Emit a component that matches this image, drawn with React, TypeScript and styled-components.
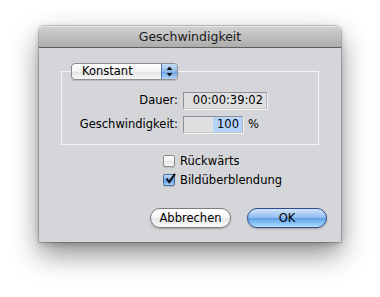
import React from "react";
import styled, { createGlobalStyle } from "styled-components";

const Global = createGlobalStyle`
  html, body { margin: 0; padding: 0; background: #ffffff; }
  body { font-family: "DejaVu Sans", Verdana, sans-serif; color: #000; }
`;

const Stage = styled.div`
  padding: 26px 0 0 39px;
  width: 380px;
  height: 297px;
  box-sizing: border-box;
`;

const Window = styled.div`
  width: 302px;
  display: flex;
  flex-direction: column;
  background: #d5d6d9;
  border-radius: 5px 5px 0 0;
  box-shadow: 0 0 0 1px rgba(0, 0, 0, 0.18), 0 12px 28px rgba(0, 0, 0, 0.45),
    0 2px 6px rgba(0, 0, 0, 0.2);
`;

const TitleBar = styled.div`
  height: 21px;
  display: flex;
  align-items: center;
  justify-content: center;
  font-size: 12.5px;
  color: #1a1a1a;
  background: linear-gradient(#d2d2d2, #adadad);
  border-bottom: 1px solid #5f5f5f;
  border-radius: 5px 5px 0 0;
  box-shadow: inset 0 1px 0 rgba(255, 255, 255, 0.55);
`;

const Body = styled.div`
  display: flex;
  flex-direction: column;
  padding: 0 22px 14px 22px;
  font-size: 11.5px;
`;

const Group = styled.fieldset`
  margin: 15px 0 0 0;
  padding: 0 9px 11px 9px;
  border: 1px solid #f3f3f3;
  min-width: 0;
`;

const Legend = styled.legend`
  padding: 0;
  margin: 0;
`;

const Popup = styled.div`
  width: 107px;
  height: 17px;
  box-sizing: border-box;
  display: flex;
  align-items: stretch;
  border: 1px solid #8e8e8e;
  border-radius: 4px;
  overflow: hidden;
  background: linear-gradient(#ffffff, #f2f2f2 50%, #e2e2e2 51%, #f7f7f7);
  box-shadow: 0 1px 1px rgba(0, 0, 0, 0.15);
`;

const PopupLabel = styled.span`
  flex: 1;
  padding-left: 10px;
  line-height: 15px;
  font-size: 11.5px;
`;

const PopupArrows = styled.span`
  width: 15px;
  display: flex;
  align-items: center;
  justify-content: center;
  border-left: 1px solid #4f78b5;
  background: linear-gradient(#c9def7, #8fb9ec 50%, #6aa1e5 51%, #b6d6fb);
`;

const Grid = styled.div`
  display: grid;
  grid-template-columns: 107px 1fr;
  column-gap: 5px;
  row-gap: 7px;
  align-items: center;
  margin-top: 12px;
`;

const Label = styled.span`
  text-align: right;
  line-height: 17px;
`;

const FieldCell = styled.div`
  display: flex;
  align-items: center;
  gap: 5px;
`;

const Field = styled.div<{ $w: number }>`
  width: ${(p) => p.$w}px;
  height: 17px;
  box-sizing: border-box;
  display: flex;
  justify-content: flex-end;
  align-items: stretch;
  background: #dfdfe1;
  border: 1px solid #8f8f8f;
  border-right-color: #b4b4b4;
  border-bottom-color: #c6c6c6;
  box-shadow: 1px 1px 0 #f2f2f2;
  padding-right: 3px;
  line-height: 15px;
`;

const Selected = styled.span`
  background: #b4d4fb;
  padding-left: 4px;
  margin-right: -3px;
  padding-right: 3px;
`;

const Unit = styled.span`
  line-height: 17px;
`;

const Checks = styled.div`
  display: flex;
  flex-direction: column;
  margin: 6px 0 0 102px;
`;

const CheckRow = styled.div`
  height: 19px;
  display: flex;
  align-items: center;
  gap: 5px;
`;

const Box = styled.span<{ $on?: boolean }>`
  width: 12px;
  height: 12px;
  box-sizing: border-box;
  border-radius: 2px;
  display: flex;
  align-items: center;
  justify-content: center;
  border: 1px solid ${(p) => (p.$on ? "#4a6e9e" : "#8d8d8d")};
  background: ${(p) =>
    p.$on
      ? "linear-gradient(#c3dbf6, #7eb2ec 50%, #5a98e3 51%, #a9d0fb)"
      : "linear-gradient(#ffffff, #f1f1f1 50%, #e3e3e3 51%, #f6f6f6)"};
  box-shadow: 0 1px 1px rgba(0, 0, 0, 0.12);
`;

const Buttons = styled.div`
  display: flex;
  justify-content: flex-end;
  gap: 16px;
  margin-top: 19px;
  margin-right: -8px;
`;

const Button = styled.div<{ $primary?: boolean; $w: number }>`
  width: ${(p) => p.$w}px;
  height: 20px;
  box-sizing: border-box;
  border-radius: 10px;
  display: flex;
  align-items: center;
  justify-content: center;
  font-size: 11.5px;
  border: 1px solid ${(p) => (p.$primary ? "#2c4f8c" : "#7d7d7d")};
  background: ${(p) =>
    p.$primary
      ? "linear-gradient(#d2e5fb, #8dbcf0 48%, #5f9fe6 52%, #9bd0fb 90%, #c7ebff)"
      : "linear-gradient(#ffffff, #f6f6f6 48%, #e6e6e6 52%, #fbfbfb)"};
  box-shadow: 0 1px 2px rgba(0, 0, 0, 0.25);
`;

export default function App() {
  return (
    <>
      <Global />
      <Stage>
        <Window>
          <TitleBar>Geschwindigkeit</TitleBar>
          <Body>
            <Group>
              <Legend>
                <Popup>
                  <PopupLabel>Konstant</PopupLabel>
                  <PopupArrows>
                    <svg width="7" height="11" viewBox="0 0 7 11">
                      <path d="M3.5 0.5 L6.5 4 L0.5 4 Z" fill="#111" />
                      <path d="M3.5 10.5 L6.5 7 L0.5 7 Z" fill="#111" />
                    </svg>
                  </PopupArrows>
                </Popup>
              </Legend>
              <Grid>
                <Label>Dauer:</Label>
                <FieldCell>
                  <Field $w={84}>00:00:39:02</Field>
                </FieldCell>
                <Label>Geschwindigkeit:</Label>
                <FieldCell>
                  <Field $w={60}>
                    <Selected>100</Selected>
                  </Field>
                  <Unit>%</Unit>
                </FieldCell>
              </Grid>
            </Group>
            <Checks>
              <CheckRow>
                <Box />
                <span>Rückwärts</span>
              </CheckRow>
              <CheckRow>
                <Box $on>
                  <svg width="11" height="11" viewBox="0 0 11 11" style={{ marginTop: -2, marginRight: -2 }}>
                    <path d="M1.5 5.5 L4.2 9 L10 0.8" fill="none" stroke="#0a0a0a" strokeWidth="2" />
                  </svg>
                </Box>
                <span>Bildüberblendung</span>
              </CheckRow>
            </Checks>
            <Buttons>
              <Button $w={81}>Abbrechen</Button>
              <Button $w={80} $primary>
                OK
              </Button>
            </Buttons>
          </Body>
        </Window>
      </Stage>
    </>
  );
}
